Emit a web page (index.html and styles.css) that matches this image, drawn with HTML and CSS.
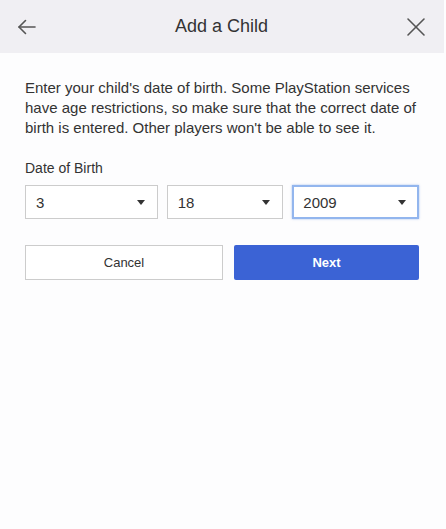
FILE: index.html
```html
<!DOCTYPE html>
<html lang="en">
<head>
    <meta charset="UTF-8">
    <meta name="viewport" content="width=device-width, initial-scale=1.0">
    <title>Add a Child</title>
    <link rel="stylesheet" href="styles.css">
</head>
<body>
    <header class="topbar">
        <button class="icon-btn" aria-label="Back">
            <svg width="22" height="18" viewBox="0 0 22 18" fill="none" stroke="#555" stroke-width="1.6" stroke-linecap="round" stroke-linejoin="round">
                <path d="M19 9H3"/>
                <path d="M9.5 2.5L3 9l6.5 6.5"/>
            </svg>
        </button>
        <h1 class="title">Add a Child</h1>
        <button class="icon-btn" aria-label="Close">
            <svg width="20" height="20" viewBox="0 0 20 20" fill="none" stroke="#555" stroke-width="1.6" stroke-linecap="round">
                <path d="M2 2l16 16"/>
                <path d="M18 2L2 18"/>
            </svg>
        </button>
    </header>

    <main class="content">
        <p class="intro">Enter your child's date of birth. Some PlayStation services have age restrictions, so make sure that the correct date of birth is entered. Other players won't be able to see it.</p>

        <label class="field-label">Date of Birth</label>
        <div class="dob-row">
            <div class="select month">
                <span>3</span>
                <svg class="caret" width="8" height="5" viewBox="0 0 8 5"><path d="M0 0h8L4 5z" fill="#333"/></svg>
            </div>
            <div class="select day">
                <span>18</span>
                <svg class="caret" width="8" height="5" viewBox="0 0 8 5"><path d="M0 0h8L4 5z" fill="#333"/></svg>
            </div>
            <div class="select year focused">
                <span>2009</span>
                <svg class="caret" width="8" height="5" viewBox="0 0 8 5"><path d="M0 0h8L4 5z" fill="#333"/></svg>
            </div>
        </div>

        <div class="actions">
            <button class="btn btn-cancel">Cancel</button>
            <button class="btn btn-next">Next</button>
        </div>
    </main>
</body>
</html>
```

FILE: styles.css
```css
body {
    font-family: 'Liberation Sans', Arial, sans-serif;
    color: #333;
    margin: 0;
    padding: 0;
    background-color: #fdfdfe;
}
.topbar {
    height: 53px;
    background: #f0eff3;
    display: flex;
    align-items: center;
    justify-content: space-between;
    padding: 0 17px 0 16px;
    margin-right: 2px;
}
.icon-btn {
    background: none;
    border: none;
    padding: 0;
    width: 22px;
    height: 22px;
    display: flex;
    align-items: center;
    justify-content: center;
    cursor: pointer;
}
.title {
    margin: 0;
    font-size: 18px;
    font-weight: normal;
    color: #333;
}
.content {
    padding: 25px 27px 0 25px;
}
.intro {
    margin: 0;
    font-size: 15px;
    line-height: 20px;
}
.field-label {
    display: block;
    margin-top: 21px;
    font-size: 14px;
    line-height: 18px;
}
.dob-row {
    display: flex;
    gap: 9px;
    margin-top: 8px;
}
.select {
    box-sizing: border-box;
    height: 34px;
    border: 1px solid #ccc;
    background: #fff;
    display: flex;
    align-items: center;
    justify-content: space-between;
    padding: 0 12px 0 10px;
    font-size: 15px;
}
.month {
    width: 133px;
}
.day {
    width: 117px;
}
.year {
    width: 127px;
}
.focused {
    border: 2px solid #93b6ee;
    box-shadow: 0 0 2px rgba(80, 130, 220, 0.5);
    padding-left: 9px;
    padding-right: 11px;
}
.actions {
    display: flex;
    gap: 11px;
    margin-top: 26px;
}
.btn {
    height: 35px;
    font-family: 'Liberation Sans', Arial, sans-serif;
    font-size: 13px;
    cursor: pointer;
}
.btn-cancel {
    width: 198px;
    background: #fff;
    border: 1px solid #ccc;
    color: #333;
}
.btn-next {
    width: 185px;
    background: #3b63d5;
    border: none;
    border-radius: 2px;
    color: #fff;
    font-weight: bold;
}
```
